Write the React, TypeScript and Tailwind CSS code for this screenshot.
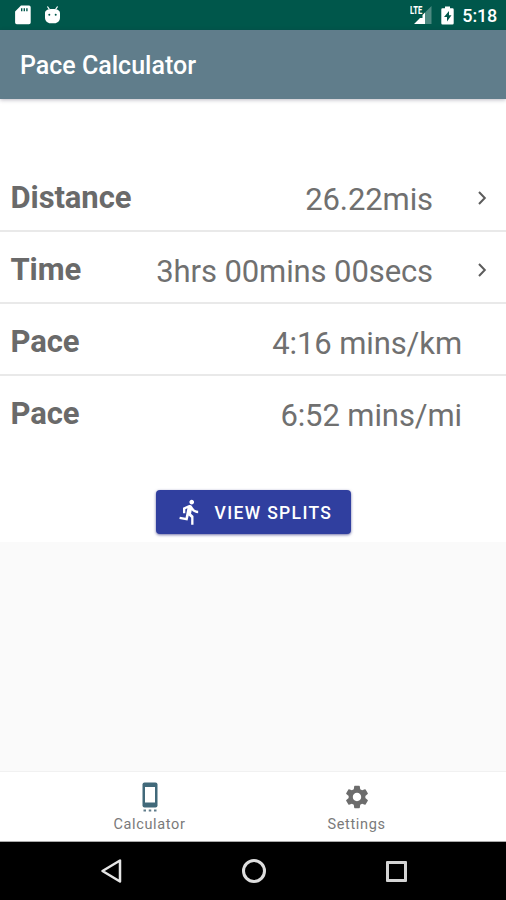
import type { ReactNode } from "react";
import { MdDirectionsRun, MdSettings } from "react-icons/md";

function StatusBar() {
  return (
    <div className="flex h-[30px] shrink-0 items-center bg-[#00574b] pr-[9px] pl-[14px] text-white">
      <svg className="h-[20px] w-[17px]" viewBox="0 0 17 20" fill="currentColor">
        <path
          fillRule="evenodd"
          d="M7 .5h8a1.7 1.7 0 0 1 1.7 1.7v15.3a1.7 1.7 0 0 1-1.7 1.7H2.8a1.7 1.7 0 0 1-1.7-1.7V6.4zM7 3.2v3h1.4v-3zm2.6 0v3H11v-3zm2.6 0v3h1.4v-3z"
        />
      </svg>
      <svg className="-mt-px ml-[13px] h-[18px] w-[17px]" viewBox="0 0 17 18" fill="currentColor">
        <path d="M3.4.5l2.1 3M13.6.5l-2.1 3" stroke="currentColor" strokeWidth="1.3" />
        <path
          fillRule="evenodd"
          d="M1 7.2C1 4.4 3.6 3 8.5 3S16 4.4 16 7.2v4.6c0 3-2.5 5.5-5.500 5.500h-4C3.500 17.300 1 14.800 1 11.800zM4.300 8.800a1 1 0 1 0 2 0a1 1 0 1 0-2 0zm6.400 0a1 1 0 1 0 2 0a1 1 0 1 0-2 0z"
        />
      </svg>
      <div className="flex-1" />
      <div className="relative h-[20px] w-[24px]">
        <svg className="h-[20px] w-[24px]" viewBox="0 0 24 20" fill="currentColor">
          <path d="M23.500 1v18H17V7.500z" opacity=".3" />
          <path d="M17 12v7H6l6-6h2.500V10l2.500-2.500z" />
        </svg>
        <span className="absolute top-[1px] left-[2px] origin-left scale-x-[0.72] text-[10.500px] leading-[10px] font-extrabold">
          LTE
        </span>
      </div>
      <svg className="ml-[9px] h-[19px] w-[13px]" viewBox="0 0 13 19" fill="currentColor">
        <path
          fillRule="evenodd"
          d="M4 .5h5v1.700h2.500A1.200 1.200 0 0 1 12.700 3.400v13.900a1.200 1.200 0 0 1-1.200 1.200h-10A1.200 1.200 0 0 1 .3 17.300V3.400a1.200 1.200 0 0 1 1.200-1.200H4zM8 5l-5 6h3v4.500l4.500-6.200H8z"
        />
      </svg>
      <span className="mt-px ml-[8px] text-[18px] leading-[20px] font-medium tracking-[-0.2px]">5:18</span>
    </div>
  );
}

function Row({ label, value, chevron, last }: { label: string; value: string; chevron?: boolean; last?: boolean }) {
  return (
    <div
      className={
        "flex h-[72px] items-start border-b-2 pl-[10.500px] " +
        (last ? "border-transparent" : "border-[#e9e9e9]")
      }
    >
      <span className="pt-[20px] text-[31px] leading-[36px] font-bold tracking-[-0.1px] text-[#6a6a6a]">{label}</span>
      <span className="ml-auto pt-[22px] text-[31px] leading-[36px] tracking-[-0.1px] text-[#707070]">{value}</span>
      {chevron ? (
        <svg className="mt-[30px] mr-[16px] ml-[43px] h-[16px] w-[14px]" viewBox="0 0 14 16" fill="none" stroke="#5c5c5c" strokeWidth="2">
          <path d="M3 2l5.800 6L3 14" />
        </svg>
      ) : (
        <span className="w-[44px]" />
      )}
    </div>
  );
}

function Tab({ icon, label }: { icon: ReactNode; label: string }) {
  return (
    <div className="flex w-[207px] flex-col items-center pt-[9px]">
      <span className="flex h-[32px] items-center justify-center">{icon}</span>
      <span className="mt-[3px] text-[14.500px] leading-[18px] tracking-[0.650px] text-[#7a7a7a]">{label}</span>
    </div>
  );
}

export default function App() {
  return (
    <div className="flex h-[900px] w-[506px] flex-col overflow-hidden bg-[#fafafa] font-['Roboto',sans-serif]">
      <StatusBar />
      <header className="z-10 flex h-[69px] shrink-0 items-center bg-[#607d8b] pt-[3px] pl-[20px] shadow-[0_1px_4px_rgba(40,30,60,0.3)]">
        <h1 className="text-[25px] leading-[28px] font-medium text-white">Pace Calculator</h1>
      </header>
      <main className="flex h-[443px] shrink-0 flex-col bg-white pt-[61px]">
        <Row label="Distance" value="26.22mis" chevron />
        <Row label="Time" value="3hrs 00mins 00secs" chevron />
        <Row label="Pace" value="4:16 mins/km" />
        <Row label="Pace" value="6:52 mins/mi" last />
        <button className="mx-auto mt-[42px] flex h-[44px] w-[195px] items-center rounded-[4px] bg-[#303f9f] pl-[20px] text-white shadow-[0_1px_3px_rgba(20,20,110,0.6)]">
          <MdDirectionsRun size={28} />
          <span className="mt-[2px] ml-[11px] text-[17.500px] leading-[20px] font-medium tracking-[1.350px] whitespace-nowrap">
            VIEW SPLITS
          </span>
        </button>
      </main>
      <div className="flex-1" />
      <nav className="flex h-[71px] shrink-0 justify-center border-t border-b border-t-[#f1f1f1] border-b-[#aaa] bg-white">
        <Tab
          label="Calculator"
          icon={
            <svg className="h-[32px] w-[18px]" viewBox="0 0 18 32">
              <rect x="1.500" y="1.500" width="15" height="25" rx="2" fill="#41697a" />
              <rect x="4" y="6" width="10" height="15.500" fill="#fff" />
              <path d="M2.500 28.500h2.500v2h-2.500zM7.750 28.500h2.500v2h-2.500zM13 28.500h2.500v2h-2.500z" fill="#607d8b" />
            </svg>
          }
        />
        <Tab label="Settings" icon={<MdSettings size={28} color="#6c6c6c" />} />
      </nav>
      <div className="flex h-[58px] shrink-0 items-center bg-black pl-[100px]">
        <svg className="h-[26px] w-[23px]" viewBox="0 0 23 26" fill="none" stroke="#e6e6e6" strokeWidth="2.500" strokeLinejoin="round">
          <path d="M20 2.500v21L2.500 13z" />
        </svg>
        <span className="ml-[119px] size-[24px] rounded-full border-[3px] border-[#dedede]" />
        <span className="ml-[120px] size-[21px] rounded-[1px] border-[3px] border-[#d4d4d4]" />
      </div>
    </div>
  );
}
